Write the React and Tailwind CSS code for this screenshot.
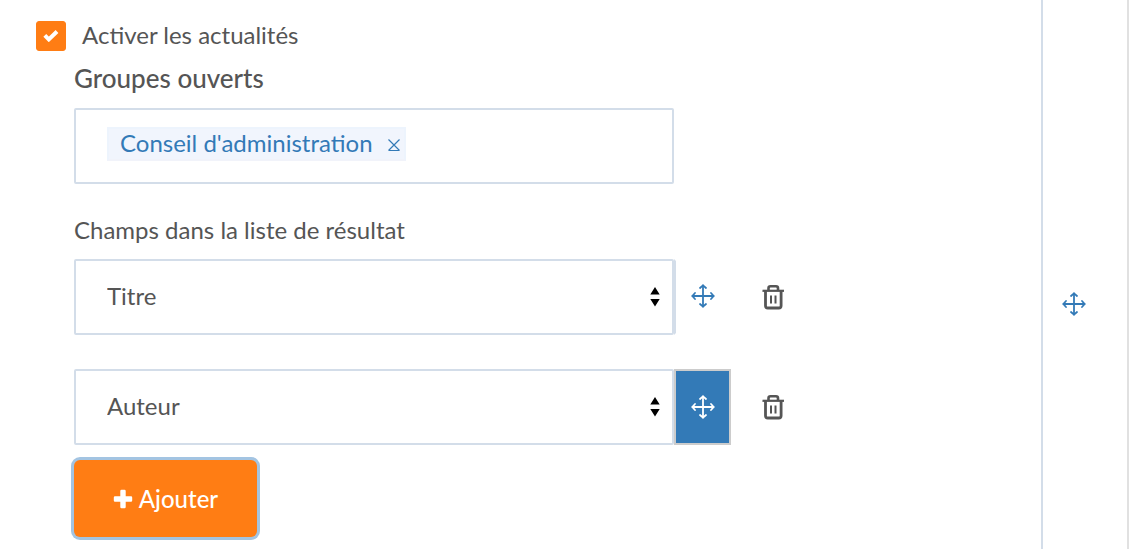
import React, { useState } from 'react';

const MoveIcon = () => (
  <svg viewBox="0 0 24 24" className="w-6 h-6" fill="none" stroke="currentColor" strokeWidth="1.8" strokeLinecap="round" strokeLinejoin="round" aria-hidden="true">
    <path d="M12 1.5v21M1.5 12h21" />
    <path d="M9 4l3-2.7L15 4M9 20l3 2.7 3-2.7M4 9l-2.7 3L4 15M20 9l2.7 3-2.7 3" />
  </svg>
);

const TrashIcon = () => (
  <svg viewBox="0 0 24 26" className="w-6 h-[26px]" fill="none" stroke="currentColor" aria-hidden="true">
    <path d="M1.5 6.800h21.500" strokeWidth="2.200" />
    <path d="M4.500 7v14.700a2.300 2.300 0 0 0 2.300 2.300h11a2.300 2.300 0 0 0 2.300-2.300V7" strokeWidth="2.800" />
    <path d="M7.500 6V4.300a2 2 0 0 1 2-2h5.500a2 2 0 0 1 2 2V6" strokeWidth="2.600" />
    <path d="M10 11.500v8M14.500 11.500v8" strokeWidth="2" />
  </svg>
);

const FieldRow = ({ label, value, options, active, onChange }) => (
  <div className="flex items-center">
    <div className="relative w-[600px]">
      <select
        aria-label={label}
        value={value}
        onChange={(e) => onChange(e.target.value)}
        className="block w-full h-[76px] appearance-none rounded-xs border-2 border-[#d3dde9] bg-white pl-[31px] pr-10 pb-[2px] text-[#555555] outline-none"
      >
        {options.map((option) => (
          <option key={option}>{option}</option>
        ))}
      </select>
      <svg viewBox="0 0 10 20" className="pointer-events-none absolute right-[14px] top-[28px] w-[10px] h-5" fill="black" aria-hidden="true">
        <path d="M5 0l4.7 7.500H.3zM5 19.500L.3 12h9.400z" />
      </svg>
    </div>
    <button
      aria-label="Déplacer"
      className={
        active
          ? 'flex w-[57px] h-[76px] items-center justify-center border-2 border-[#cccccc] bg-[#337ab7] text-white'
          : 'flex w-[57px] h-[76px] items-center justify-center border-2 border-transparent border-l-[#d3dde9] pb-[2px] text-[#337ab7]'
      }
    >
      <MoveIcon />
    </button>
    <button aria-label="Supprimer" className="ml-[30px] text-[#555555]">
      <TrashIcon />
    </button>
  </div>
);

const App = () => {
  const [enabled, setEnabled] = useState(true);
  const [groups, setGroups] = useState(["Conseil d'administration"]);
  const [fields, setFields] = useState(['Titre', 'Auteur']);

  const updateField = (index, value) => {
    setFields(fields.map((field, i) => (i === index ? value : field)));
  };

  return (
    <div className="flex min-h-screen bg-white pr-[11px] font-['Lato','Open_Sans',sans-serif] text-2xl text-[#555555]">
      <main className="flex-1 border-r-2 border-[#d3dde9] pl-9 pt-5">
        <div className="flex h-8 items-center">
          <span className="relative flex">
            <input
              id="enable-news"
              type="checkbox"
              checked={enabled}
              onChange={(e) => setEnabled(e.target.checked)}
              className="w-[30px] h-[30px] appearance-none rounded-[3px] border border-[#ff7d14] checked:bg-[#ff7d14]"
            />
            {enabled && (
              <svg viewBox="0 0 16 12" className="pointer-events-none absolute left-[7px] top-[9px] w-4 h-3" fill="none" stroke="white" strokeWidth="4" aria-hidden="true">
                <path d="M1.800 5.300l4 4.100 8.200-7.900" />
              </svg>
            )}
          </span>
          <label htmlFor="enable-news" className="ml-4 pb-[2px]">Activer les actualités</label>
        </div>

        <div className="pl-[38px]">
          <h2 className="mt-[10px] h-8 leading-8 text-[26px] font-medium">Groupes ouverts</h2>
          <div className="mt-[14px] flex w-[600px] h-[76px] items-start rounded-xs border-2 border-[#d3dde9] pl-[31px] pt-[17px]">
            {groups.map((group) => (
              <span key={group} className="flex h-[34px] items-center border-2 border-[#edf4fd] border-b-[#f1f3fa] bg-[#f1f5fd] pl-[11px] pr-[3px] text-[#337ab7]">
                <span className="pb-[2px]">{group}</span>
                <button
                  aria-label={`Retirer ${group}`}
                  onClick={() => setGroups(groups.filter((g) => g !== group))}
                  className="ml-[14px] pt-[2px]"
                >
                  <svg viewBox="0 0 14 14" className="w-[14px] h-[14px]" fill="none" stroke="currentColor" strokeWidth="1.200" aria-hidden="true">
                    <path d="M1.500 1.500l11 11M12.500 1.500l-11 11M1.500 12.500h11" />
                  </svg>
                </button>
              </span>
            ))}
          </div>

          <h3 className="mt-[30px] h-8 leading-8">Champs dans la liste de résultat</h3>
          <div className="mt-[13px] flex flex-col gap-[34px]">
            {fields.map((field, index) => (
              <FieldRow
                key={index}
                label={`Champ ${index + 1}`}
                value={field}
                options={['Titre', 'Auteur']}
                active={index === 1}
                onChange={(value) => updateField(index, value)}
              />
            ))}
          </div>

          <button
            onClick={() => setFields([...fields, 'Titre'])}
            className="mt-[15px] flex w-[183px] h-[77px] items-center justify-center gap-[6px] rounded-md bg-[#ff7d14] font-medium text-white ring-3 ring-[#a3c4e2]"
          >
            <svg viewBox="0 0 20 20" className="w-5 h-5" fill="white" aria-hidden="true">
              <path d="M8.500 .8h3a1.200 1.200 0 0 1 1.200 1.200v5.300h5.300A1.200 1.200 0 0 1 19.200 8.500v3a1.200 1.200 0 0 1-1.200 1.200h-5.300v5.300a1.200 1.200 0 0 1-1.200 1.200h-3a1.200 1.200 0 0 1-1.200-1.200v-5.300H2A1.200 1.200 0 0 1 .8 11.500v-3A1.200 1.200 0 0 1 2 7.300h5.300V2A1.200 1.200 0 0 1 8.500 .8z" />
            </svg>
            Ajouter
          </button>
        </div>
      </main>

      <aside className="w-[86px] border-r-2 border-[#e1e1e1] pt-[292px] pl-[19px]">
        <button aria-label="Déplacer le bloc" className="block text-[#337ab7]">
          <MoveIcon />
        </button>
      </aside>
    </div>
  );
};

export default App;
